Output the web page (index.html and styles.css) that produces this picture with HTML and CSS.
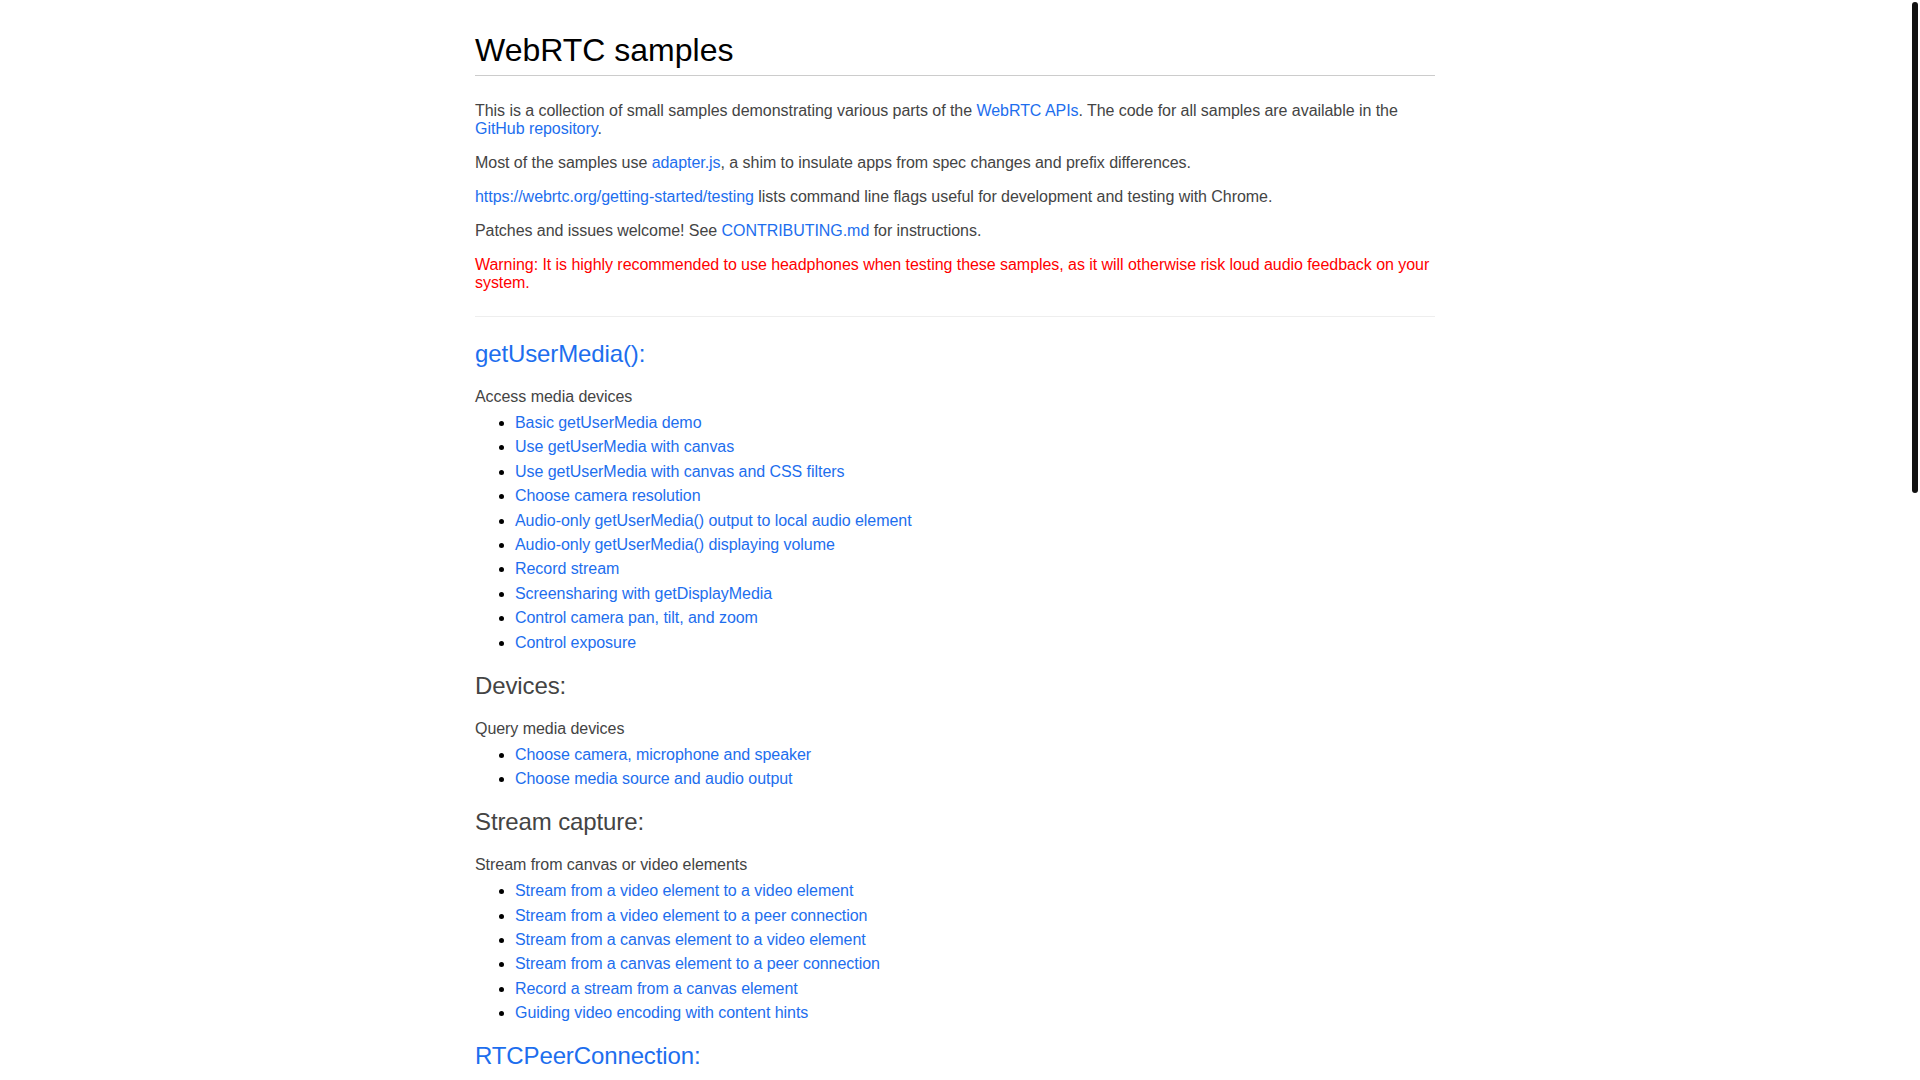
FILE: index.html
```html
<!DOCTYPE html>
<html lang="en">
<head>
<meta charset="utf-8">
<title>WebRTC samples</title>
<link rel="stylesheet" href="styles.css">
</head>
<body>
<div class="container">
  <h1>WebRTC samples</h1>
  <section class="intro">
    <p>This is a collection of small samples demonstrating various parts of the <a href="#">WebRTC APIs</a>. The code for all samples are available in the <a href="#">GitHub repository</a>.</p>
    <p>Most of the samples use <a href="#">adapter.js</a>, a shim to insulate apps from spec changes and prefix differences.</p>
    <p><a href="#">https://webrtc.org/getting-started/testing</a> lists command line flags useful for development and testing with Chrome.</p>
    <p>Patches and issues welcome! See <a href="#">CONTRIBUTING.md</a> for instructions.</p>
    <p class="warning"><strong class="warn-label">Warning:</strong> It is highly recommended to use headphones when testing these samples, as it will otherwise risk loud audio feedback on your system.</p>
  </section>

  <section class="group">
    <h2><a href="#">getUserMedia():</a></h2>
    <p class="description">Access media devices</p>
    <ul>
      <li><a href="#">Basic getUserMedia demo</a></li>
      <li><a href="#">Use getUserMedia with canvas</a></li>
      <li><a href="#">Use getUserMedia with canvas and CSS filters</a></li>
      <li><a href="#">Choose camera resolution</a></li>
      <li><a href="#">Audio-only getUserMedia() output to local audio element</a></li>
      <li><a href="#">Audio-only getUserMedia() displaying volume</a></li>
      <li><a href="#">Record stream</a></li>
      <li><a href="#">Screensharing with getDisplayMedia</a></li>
      <li><a href="#">Control camera pan, tilt, and zoom</a></li>
      <li><a href="#">Control exposure</a></li>
    </ul>
  </section>

  <section class="group">
    <h2>Devices:</h2>
    <p class="description">Query media devices</p>
    <ul>
      <li><a href="#">Choose camera, microphone and speaker</a></li>
      <li><a href="#">Choose media source and audio output</a></li>
    </ul>
  </section>

  <section class="group">
    <h2>Stream capture:</h2>
    <p class="description">Stream from canvas or video elements</p>
    <ul>
      <li><a href="#">Stream from a video element to a video element</a></li>
      <li><a href="#">Stream from a video element to a peer connection</a></li>
      <li><a href="#">Stream from a canvas element to a video element</a></li>
      <li><a href="#">Stream from a canvas element to a peer connection</a></li>
      <li><a href="#">Record a stream from a canvas element</a></li>
      <li><a href="#">Guiding video encoding with content hints</a></li>
    </ul>
  </section>

  <section class="group">
    <h2><a href="#">RTCPeerConnection:</a></h2>
    <p class="description">Controlling peer connectivity</p>
    <ul>
      <li><a href="#">Basic peer connection demo in a single tab</a></li>
      <li><a href="#">Basic peer connection demo between two tabs</a></li>
      <li><a href="#">Audio-only peer connection demo</a></li>
    </ul>
  </section>
</div>
<div class="scrollbar-thumb"></div>
</body>
</html>
```

FILE: styles.css
```css
html {
  overflow: hidden;
  background: #fff;
}

body {
  margin: 0;
  padding: 32px 10px 0 0;
  font-family: "Liberation Sans", Arial, sans-serif;
  font-size: 16px;
  letter-spacing: -0.05px;
  color: #444;
}

.container {
  max-width: 960px;
  margin: 0 auto;
}

a {
  color: #1d6eee;
  text-decoration: none;
}

h1 {
  margin: 0 0 25.6px 0;
  padding: 0 0 6.4px 0;
  border-bottom: 1px solid #ccc;
  font-size: 32px;
  font-weight: normal;
  letter-spacing: 0;
  color: #000;
}

p {
  margin: 16px 0;
  color: #444;
}

.intro {
  padding-bottom: 8px;
  border-bottom: 1px solid #eee;
  margin-bottom: 23.4px;
}

.warning {
  color: #f00;
}

.warn-label {
  font-weight: normal;
}

h2 {
  margin: 20px 0;
  font-size: 24px;
  font-weight: normal;
  letter-spacing: -0.12px;
  color: #444;
}

.description {
  margin: 16px 0 7.7px 0;
}

ul {
  margin: 0 0 20.4px 0;
  padding-left: 40px;
  color: #000;
}

li {
  margin: 0 0 6.4px 0;
}

.scrollbar-thumb {
  position: fixed;
  top: 2px;
  right: 2px;
  width: 6px;
  height: 491px;
  border-radius: 3px;
  background: #111;
}
```
